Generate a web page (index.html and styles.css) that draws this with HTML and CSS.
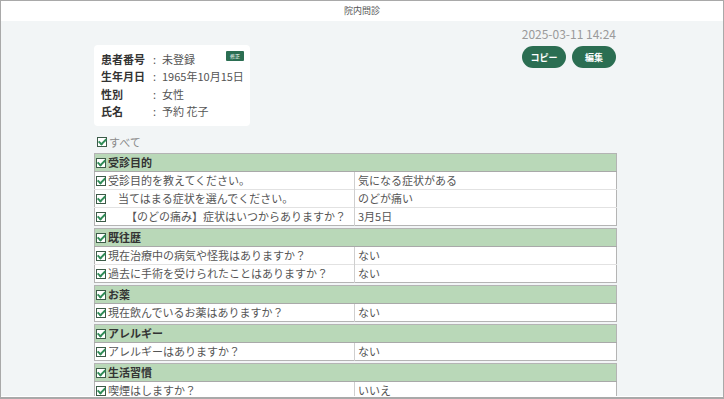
FILE: index.html
```html
<!DOCTYPE html>
<html lang="ja">
<head>
    <meta charset="UTF-8">
    <meta name="viewport" content="width=device-width, initial-scale=1.0">
    <title>院内問診</title>
    <link rel="stylesheet" href="styles.css">
</head>
<body>
    <div class="frame">
        <header class="topbar">院内問診</header>
        <main class="page">
            <div class="stamp">2025-03-11 14:24</div>
            <div class="head-row">
                <div class="patient">
                    <div class="p-label">患者番号</div><div class="p-colon">:</div>
                    <div class="p-value">未登録<span class="badge">修正</span></div>
                    <div class="p-label">生年月日</div><div class="p-colon">:</div>
                    <div class="p-value">1965年10月15日</div>
                    <div class="p-label">性別</div><div class="p-colon">:</div>
                    <div class="p-value">女性</div>
                    <div class="p-label">氏名</div><div class="p-colon">:</div>
                    <div class="p-value">予約 花子</div>
                </div>
                <div class="actions">
                    <button class="btn">コピー</button>
                    <button class="btn">編集</button>
                </div>
            </div>

            <div class="all"><span class="cb"></span>すべて</div>

            <table class="section">
                <tr><th colspan="2"><span class="cb"></span>受診目的</th></tr>
                <tr>
                    <td class="q"><span class="cb"></span>受診目的を教えてください。</td>
                    <td class="a">気になる症状がある</td>
                </tr>
                <tr>
                    <td class="q"><span class="cb"></span><span class="lv2">当てはまる症状を選んでください。</span></td>
                    <td class="a">のどが痛い</td>
                </tr>
                <tr>
                    <td class="q"><span class="cb"></span><span class="lv3">【のどの痛み】症状はいつからありますか？</span></td>
                    <td class="a">3月5日</td>
                </tr>
            </table>

            <table class="section">
                <tr><th colspan="2"><span class="cb"></span>既往歴</th></tr>
                <tr>
                    <td class="q"><span class="cb"></span>現在治療中の病気や怪我はありますか？</td>
                    <td class="a">ない</td>
                </tr>
                <tr>
                    <td class="q"><span class="cb"></span>過去に手術を受けられたことはありますか？</td>
                    <td class="a">ない</td>
                </tr>
            </table>

            <table class="section">
                <tr><th colspan="2"><span class="cb"></span>お薬</th></tr>
                <tr>
                    <td class="q"><span class="cb"></span>現在飲んでいるお薬はありますか？</td>
                    <td class="a">ない</td>
                </tr>
            </table>

            <table class="section">
                <tr><th colspan="2"><span class="cb"></span>アレルギー</th></tr>
                <tr>
                    <td class="q"><span class="cb"></span>アレルギーはありますか？</td>
                    <td class="a">ない</td>
                </tr>
            </table>

            <table class="section">
                <tr><th colspan="2"><span class="cb"></span>生活習慣</th></tr>
                <tr>
                    <td class="q"><span class="cb"></span>喫煙はしますか？</td>
                    <td class="a">いいえ</td>
                </tr>
            </table>
        </main>
    </div>
</body>
</html>
```

FILE: styles.css
```css
html, body {
    margin: 0;
    height: 100%;
}
body {
    font-family: "Noto Sans CJK JP", "Noto Sans", sans-serif;
    color: #555;
}
.frame {
    height: 100vh;
    box-sizing: border-box;
    border: 1px solid #a9a9a9;
    border-bottom-width: 2px;
    display: flex;
    flex-direction: column;
    overflow: hidden;
}
.topbar {
    height: 20px;
    line-height: 20px;
    background: #fff;
    text-align: center;
    font-size: 9px;
    color: #555;
    flex-shrink: 0;
}
.page {
    flex: 1;
    background: #f2f5f6;
    padding: 6px 0 0 93px;
    overflow: hidden;
    border-bottom: 1px solid #fff;
}
.stamp {
    width: 522px;
    text-align: right;
    font-size: 12px;
    line-height: 14px;
    color: #9a9a9a;
}
.head-row {
    width: 522px;
    display: flex;
    justify-content: space-between;
    align-items: flex-start;
    margin-top: 4px;
}
.patient {
    width: 156px;
    box-sizing: border-box;
    background: #fff;
    border-radius: 4px;
    padding: 5px 6px 6px 7px;
    display: grid;
    grid-template-columns: 52px 9px 1fr;
    grid-auto-rows: 17.5px;
    align-items: center;
    font-size: 11px;
}
.p-label {
    font-weight: bold;
    color: #333;
}
.p-value {
    display: flex;
    align-items: center;
    color: #555;
}
.badge {
    margin-left: auto;
    background: #2b6e52;
    color: #fff;
    font-size: 5px;
    line-height: 10px;
    padding: 0 4px;
    border-radius: 1px;
    margin-top: -5px;
}
.actions {
    display: flex;
    gap: 6px;
    margin-top: 1px;
}
.btn {
    width: 44px;
    height: 22px;
    border: none;
    border-radius: 11px;
    background: #2b6e52;
    color: #fff;
    font-family: inherit;
    font-size: 9px;
    font-weight: bold;
    padding: 0;
}
.all {
    margin-top: 9px;
    margin-bottom: 4px;
    padding-left: 3px;
    line-height: 14px;
    font-size: 11px;
    color: #8a8a8a;
    display: flex;
    align-items: center;
}
.cb {
    display: inline-block;
    width: 10px;
    height: 10px;
    box-sizing: border-box;
    border: 1.5px solid #3c5b48;
    background: #fff;
    position: relative;
    margin-right: 2px;
    flex-shrink: 0;
}
.cb::after {
    content: "";
    position: absolute;
    left: 2px;
    top: -1px;
    width: 3px;
    height: 6px;
    border: solid #2f8c57;
    border-width: 0 2px 2px 0;
    transform: rotate(45deg);
}
.section {
    width: 523px;
    border-collapse: collapse;
    border: 1px solid #b4b4b4;
    margin-bottom: 2px;
    font-size: 11px;
    background: #fff;
}
.section th {
    background: #b9d8b8;
    color: #333;
    text-align: left;
    font-weight: bold;
    height: 17px;
    line-height: 17px;
    padding: 0 0 0 1px;
    border-bottom: 1px solid #a9a9a9;
}
.section td {
    height: 17px;
    line-height: 17px;
    padding: 0;
    border-top: 1px solid #e2e2e2;
}
.section th,
.section .q {
    white-space: nowrap;
}
.section th .cb,
.section .q .cb {
    vertical-align: -1px;
}
.section .q {
    width: 258px;
    padding-left: 1px;
    border-right: 1px solid #cfcfcf;
}
.section .a {
    padding-left: 3px;
}
.lv2 {
    padding-left: 10px;
}
.lv3 {
    padding-left: 18px;
}
```
